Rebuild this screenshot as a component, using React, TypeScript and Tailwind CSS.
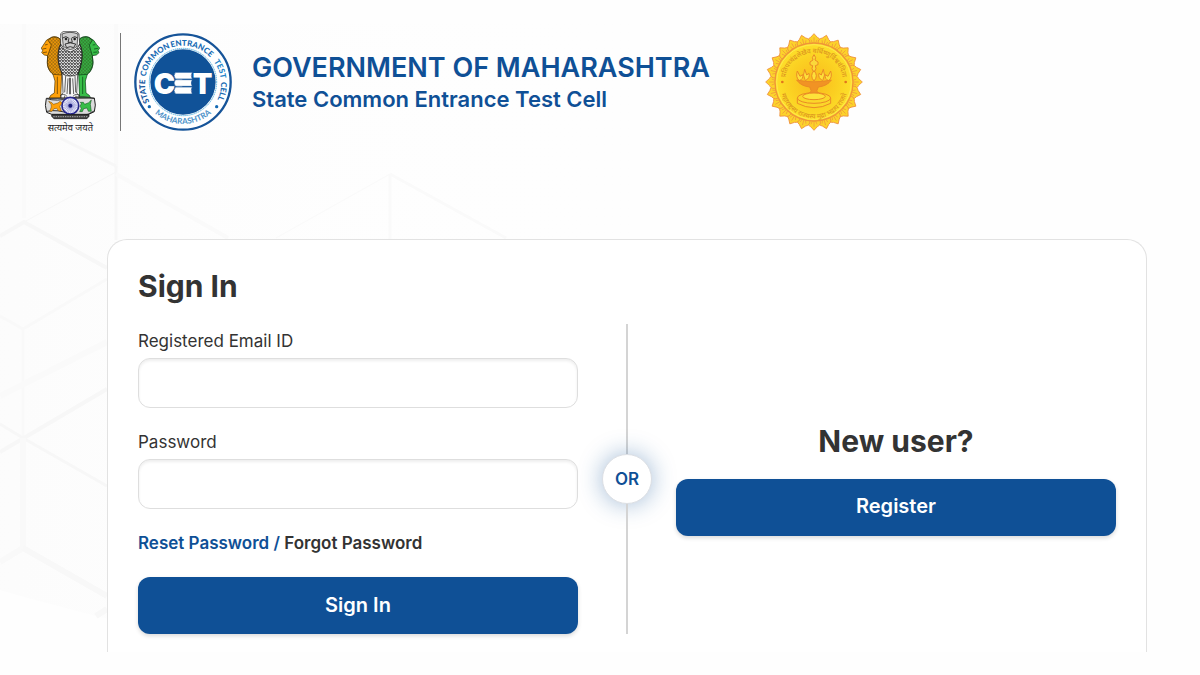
import React, { useState } from 'react';

const HexBackground: React.FC = () => (
  <svg
    className="pointer-events-none absolute left-0 top-0 h-[675px] w-[700px]"
    viewBox="0 0 700 675"
    fill="none"
    aria-hidden="true"
  >
    <defs>
      <linearGradient id="hexFade" x1="0" y1="0" x2="1" y2="0">
        <stop offset="0" stopColor="#f8f8f8" />
        <stop offset="0.5" stopColor="#fdfdfd" stopOpacity="0.6" />
        <stop offset="1" stopColor="#fefefe" stopOpacity="0" />
      </linearGradient>
    </defs>
    <path d="M0 24H700V652H240L96 616L28 598L0 590Z" fill="url(#hexFade)" opacity="0.35" />
    <g stroke="#f7f7f7" strokeWidth="4">
      <path d="M0 236L24 222L107 268" />
      <path d="M24 24V218M116 24V168" stroke="#fafafa" />
      <path d="M116 166V240M60 138L116 166" strokeWidth="3" />
      <path d="M24 222L116 172" strokeWidth="1" />
      <path d="M116 174L228 238" stroke="#fafafa" />
      <path d="M0 316L23 329L107 279M23 329V438" strokeWidth="3" stroke="#f9f9f9" />
      <path d="M0 396L107 342" stroke="#fafafa" strokeWidth="6" />
      <path d="M0 452L107 389" />
      <path d="M0 424L23 438L107 486" strokeWidth="3" />
      <path d="M23 438V548L0 562" strokeWidth="6" stroke="#f9f9f9" />
      <path d="M23 548L107 596M96 616L107 609" strokeWidth="6" stroke="#f8f8f8" />
    </g>
    <g stroke="#fafafa" strokeWidth="3">
      <path d="M276 238L390 174" strokeWidth="1" />
      <path d="M390 174L506 238M390 174V240" />
    </g>
  </svg>
);

const NationalEmblem: React.FC = () => (
  <svg className="h-[102px] w-[60px] shrink-0 overflow-visible" viewBox="30 36 180 306" role="img" aria-label="State Emblem of India">
    <defs>
      <pattern id="mane" width="10" height="10" patternUnits="userSpaceOnUse">
        <path d="M0 1Q5 7 10 1M-5 6Q0 12 5 6Q10 12 15 6" fill="none" stroke="#2c2c10" strokeWidth="1.3" />
      </pattern>
      <pattern id="maneDark" width="9" height="9" patternUnits="userSpaceOnUse">
        <path d="M0 1Q4 7 9 1M-4 6Q0 11 5 6Q9 11 13 6" fill="none" stroke="#111" strokeWidth="2.2" />
      </pattern>
    </defs>

    {/* left lion */}
    <g stroke="#4a3200" strokeWidth="2" strokeLinejoin="round">
      <path d="M91 61C84 53 70 51 61 57L50 63L40 78L34 87L38 95L35 101L43 108L53 110L52 130C52 148 60 158 69 166L75 186L73 222L62 229L58 237H92L95 165Z" fill="#ffa10a" />
      <path d="M91 61C84 53 70 51 61 57L54 64L64 78L59 93L53 110L52 130C52 148 60 158 69 166L95 168Z" fill="url(#mane)" />
      <path d="M45 78L53 76M38 90L49 88M39 101L51 99M82 173V225" fill="none" />
    </g>

    {/* right lion */}
    <g stroke="#063d12" strokeWidth="2" strokeLinejoin="round">
      <path d="M148 61C156 52 171 51 180 57L191 64L200 77L209 87L204 95L207 101L199 108L187 110L189 130C188 149 181 158 172 166L166 186L168 222L178 229L182 237H149L146 165Z" fill="#37bd48" />
      <path d="M148 61C156 52 171 51 180 57L187 64L178 78L182 93L187 110L189 130C188 149 181 158 172 166L146 168Z" fill="url(#mane)" />
      <path d="M188 78L196 77M192 90L204 88M190 100L202 99M158 173V225" fill="none" />
    </g>

    {/* centre lion */}
    <g stroke="#1a1a1a" strokeWidth="2" strokeLinejoin="round">
      <path d="M92 44L99 38H139L147 44L149 75C156 89 158 106 155 125C151 142 147 158 143 167L140 222L147 229V237H93V229L99 221L97 167C91 151 86 141 85 125C83 106 85 90 92 75Z" fill="#f6f6f6" />
      <path d="M92 75C85 90 83 106 85 125C87 143 94 158 99 166Q120 177 143 166C149 155 154 141 155 125C158 106 156 89 149 75L138 91L121 99L103 91Z" fill="url(#maneDark)" />
      <path d="M96 45Q120 35 144 45L141 82Q121 101 100 82Z" fill="#cfcfcf" />
      <path d="M98 57Q108 49 116 57M125 57Q135 49 143 57M117 58L114 70H127L124 58M105 75Q120 68 137 75L131 86Q121 80 110 86Z" fill="none" strokeWidth="2.5" />
      <circle cx="108" cy="60" r="3" fill="#111" />
      <circle cx="134" cy="60" r="3" fill="#111" />
      <path d="M107 171L104 220M114 178L111 225M128 178L131 225M135 171L137 220" fill="none" />
      <path d="M120 176V226" strokeWidth="4" fill="none" />
      <path d="M91 230Q101 221 112 233M128 233Q138 221 150 230M104 230V237M138 230V237" fill="none" />
    </g>

    {/* abacus with the wheel */}
    <path d="M49 238Q43 260 50 280L65 286H176L193 278Q199 259 193 237Z" fill="#dcdcdc" stroke="#222" strokeWidth="3" />
    <path d="M50 239Q80 248 120 238T193 239M51 277Q83 270 120 285T192 276" fill="none" stroke="#333" strokeWidth="3" />
    <path d="M56 247L66 251L70 256L84 252L90 247L97 252L89 262L94 276H86L80 268L72 269L66 277H59L64 264L63 256Z" fill="#ffa10a" stroke="#704400" strokeWidth="1.5" />
    <path d="M150 262L154 254L151 250L160 250L164 256L176 251L184 243L181 256L184 277H175L171 267L161 269L157 278H149L154 268Z" fill="#37bd48" stroke="#064514" strokeWidth="1.5" />
    <circle cx="121" cy="260" r="25" fill="#f2f3ff" stroke="#26268c" strokeWidth="5" />
    <g stroke="#5c5eb8" strokeWidth="1.2">
      {Array.from({ length: 12 }, (_, i) => (
        <line key={i} x1="121" y1="238" x2="121" y2="282" transform={`rotate(${i * 15} 121 260)`} />
      ))}
    </g>
    <circle cx="121" cy="260" r="6" fill="#191b7a" />
    <path d="M65 287H177V292L171 299H72L65 292Z" fill="#444" stroke="#111" strokeWidth="2" />
    <path d="M70 293H172" stroke="#ddd" strokeWidth="2" strokeDasharray="4 3" />
    <text x="121" y="335" textAnchor="middle" fontSize="28" fill="#222" className="font-['Noto_Sans_Devanagari','Noto_Sans',sans-serif] font-normal">
      सत्यमेव जयते
    </text>
  </svg>
);

// words of the outer ring, placed along the arc
const ringWords = [
  { word: 'STATE', offset: '7%', color: '#16589f' },
  { word: 'COMMON', offset: '29%', color: '#176bb4' },
  { word: 'ENTRANCE', offset: '56%', color: '#176bb4' },
  { word: 'TEST', offset: '79%', color: '#1f86c9' },
  { word: 'CELL', offset: '93%', color: '#176bb4' },
];

const CetLogo: React.FC = () => (
  <svg className="size-[98px] shrink-0" viewBox="18 25 294 294" role="img" aria-label="State Common Entrance Test Cell">
    <defs>
      <path id="cetTop" d="M64 230A114 114 0 1 1 266 230" />
      <path id="cetBottom" d="M52 230A128 128 0 0 0 278 230" />
    </defs>
    <circle cx="165" cy="172" r="143" fill="#fff" stroke="#165499" strokeWidth="7" />
    <circle cx="165" cy="172" r="101" fill="none" stroke="#4eaee0" strokeWidth="3" strokeDasharray="4 2" />
    <circle cx="165" cy="172" r="98" fill="#105298" />
    <g className="font-[Lato,sans-serif]" textAnchor="middle">
      {ringWords.map(({ word, offset, color }) => (
        <text key={word} fontSize="24" fill={color} className="font-black">
          <textPath href="#cetTop" startOffset={offset}>{word}</textPath>
        </text>
      ))}
      <text fontSize="24" fill="#4b91c8" className="font-bold">
        <textPath href="#cetBottom" startOffset="50%">MAHARASHTRA</textPath>
      </text>
    </g>
    <circle cx="64" cy="246" r="5" fill="#176bb4" />
    <circle cx="266" cy="246" r="5" fill="#176bb4" />
    <text x="165" y="207" textAnchor="middle" fontSize="86" fill="#fff" className="font-[Inter,sans-serif] font-black">
      CET
    </text>
    {/* stacked books over the middle letter */}
    <g fill="#fff" stroke="#105298" strokeWidth="2">
      <path d="M142 143H193Q187 153 193 163H142Q134 153 142 143Z" />
      <path d="M142 165H193Q187 175 193 185H142Q134 175 142 165Z" />
      <path d="M142 187H193Q187 197 193 208H142Q134 197 142 187Z" />
    </g>
  </svg>
);

const MaharashtraSeal: React.FC = () => (
  <svg className="size-[98px] shrink-0" viewBox="21 25 294 294" role="img" aria-label="Seal of Maharashtra">
    <defs>
      <radialGradient id="sealFill">
        <stop offset="0" stopColor="#f9b91c" />
        <stop offset="0.6" stopColor="#fbd022" />
        <stop offset="1" stopColor="#fde02a" />
      </radialGradient>
      <path id="sealTop" d="M81 172A87 87 0 0 1 255 172" />
      <path id="sealBottom" d="M66 180A102 102 0 0 0 270 180" />
    </defs>
    {Array.from({ length: 24 }, (_, i) => (
      <g key={i} transform={`rotate(${i * 15} 168 172)`} stroke="#ee9140" strokeWidth="2.5">
        <path d="M151 60Q144 44 158 38L168 27L178 38Q192 44 185 60Z" fill="#fcd32a" />
        <path d="M168 38V54M159 45L163 55M177 45L173 55" fill="none" strokeWidth="2" />
      </g>
    ))}
    <circle cx="168" cy="172" r="117" fill="url(#sealFill)" stroke="#ef9438" strokeWidth="4" />
    <circle cx="168" cy="172" r="112" fill="none" stroke="#ffe94d" strokeWidth="3" />
    <g fill="#dc9420" fontSize="20" className="font-['Noto_Sans_Devanagari','Noto_Sans',sans-serif] font-medium">
      <text textAnchor="middle">
        <textPath href="#sealTop" startOffset="50%">प्रतिपच्चंद्रलेखेव वर्धिष्णुर्विश्ववंदिता</textPath>
      </text>
      <text textAnchor="middle">
        <textPath href="#sealBottom" startOffset="50%">महाराष्ट्रस्य राज्यस्य मुद्रा भद्राय राजते</textPath>
      </text>
    </g>
    <circle cx="73" cy="172" r="4" fill="#e2751c" />
    <circle cx="263" cy="172" r="4" fill="#e2751c" />

    {/* lamp */}
    <g stroke="#ea8a26" strokeWidth="3" strokeLinejoin="round">
      <path d="M168 90Q176 99 171 106L180 112V120L172 123L174 132L168 145L162 132L164 123L156 120V112L165 106Q160 99 168 90Z" fill="#fbd83a" />
      <path d="M118 139Q112 158 124 168Q137 163 134 150L126 155Z" fill="#fde03a" />
      <path d="M218 139Q224 158 212 168Q199 163 202 150L210 155Z" fill="#fde03a" />
      <path d="M140 134Q132 151 142 168Q157 160 153 146L146 151Z" fill="#fde03a" />
      <path d="M196 134Q204 151 194 168Q179 160 183 146L190 151Z" fill="#fde03a" />
      <path d="M168 138Q154 153 168 169Q182 153 168 138Z" fill="#fde03a" />
      <path d="M116 166Q168 177 220 166Q208 184 181 187L176 199L184 207H152L160 199L155 187Q128 184 116 166Z" fill="#f19324" />
      <path d="M118 220V236Q168 262 218 236V220Z" fill="#fbd62a" />
      <ellipse cx="168" cy="220" rx="50" ry="16" fill="#fbd62a" />
      <ellipse cx="168" cy="215" rx="34" ry="10" fill="#fde23a" />
    </g>
  </svg>
);

const inputClass =
  'block h-[50px] w-full rounded-xl border border-[#dedede] bg-white px-4 text-base text-[#333] shadow-[inset_0_2px_3px_rgba(0,0,0,0.07)] outline-none focus:border-[#0f5096]';
const buttonClass =
  'block h-[57px] w-full rounded-xl bg-[#0f5096] pb-0.5 text-xl font-semibold text-white shadow-[0_2px_4px_rgba(0,0,0,0.15)] hover:bg-[#0c427c]';

const App: React.FC = () => {
  const [email, setEmail] = useState('');
  const [password, setPassword] = useState('');

  return (
    <div className="relative min-h-screen overflow-hidden bg-[#fefefe] pt-6 font-[Inter,sans-serif] text-[#333]">
      <HexBackground />

      <header className="relative flex items-center pl-10 pt-[7px]">
        <NationalEmblem />
        <div className="ml-5 mr-[13px] h-[98px] w-px bg-[#777]" />
        <CetLogo />
        <div className="ml-5 w-[513px] pt-0.5 text-[#0f5096]">
          <h1 className="text-[27px] font-semibold leading-8">GOVERNMENT OF MAHARASHTRA</h1>
          <p className="text-[22px] font-semibold leading-[30px]">State Common Entrance Test Cell</p>
        </div>
        <MaharashtraSeal />
      </header>

      <main className="relative ml-[107px] mr-[53px] mt-[106px] rounded-t-[20px] border border-b-0 border-[#e2e2e2] bg-white px-[30px] pb-[18px] pt-[26px]">
        <h2 className="text-[30px] font-bold leading-10">Sign In</h2>

        <div className="mt-[18px] flex">
          <form className="flex flex-1 flex-col gap-[17px]" onSubmit={(e) => e.preventDefault()}>
            <div>
              <label htmlFor="email" className="block text-[17px] leading-[34px]">
                Registered Email ID
              </label>
              <input
                id="email"
                type="email"
                value={email}
                onChange={(e) => setEmail(e.target.value)}
                className={inputClass}
              />
            </div>
            <div>
              <label htmlFor="password" className="block text-[17px] leading-[34px]">
                Password
              </label>
              <input
                id="password"
                type="password"
                value={password}
                onChange={(e) => setPassword(e.target.value)}
                className={inputClass}
              />
            </div>
            <p className="text-[17px] font-semibold leading-[34px]">
              <a href="#reset" className="text-[#0f5096]">Reset Password /</a>{' '}
              <a href="#forgot">Forgot Password</a>
            </p>
            <button type="submit" className={buttonClass}>Sign In</button>
          </form>

          <div className="flex w-[98px] flex-col items-center">
            <div className="w-0.5 flex-1 bg-[#d4d4d4]" />
            <div className="flex size-[50px] items-center justify-center rounded-full border border-[#dcdfe4] bg-white text-[17px] font-semibold leading-6 text-[#0f5096] shadow-[0_0_24px_rgba(15,80,150,0.4)]">
              OR
            </div>
            <div className="w-0.5 flex-1 bg-[#d4d4d4]" />
          </div>

          <div className="flex flex-1 flex-col justify-center pb-0.5">
            <h2 className="mb-[18px] text-center text-[30px] font-bold leading-10">New user?</h2>
            <button type="button" className={buttonClass}>Register</button>
          </div>
        </div>
      </main>
    </div>
  );
};

export default App;
